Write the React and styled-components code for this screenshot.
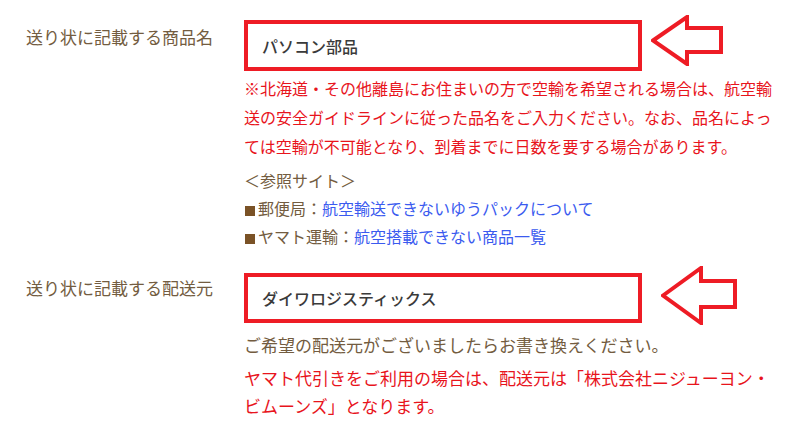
import React from "react";
import styled, { createGlobalStyle } from "styled-components";

const GlobalStyle = createGlobalStyle`
  html, body {
    margin: 0;
    padding: 0;
    background: #ffffff;
  }
  body {
    font-family: "Noto Sans CJK JP", "Noto Sans", sans-serif;
    color: #735c40;
  }
`;

const Page = styled.div`
  padding-top: 20px;
  display: flex;
  flex-direction: column;
  gap: 23px;
`;

const Row = styled.div`
  display: grid;
  grid-template-columns: 218px 536px;
  padding-left: 26px;
`;

const Label = styled.div`
  font-size: 17px;
  line-height: 28px;
  padding-top: ${(p) => p.$top}px;
  color: #735c40;
`;

const Content = styled.div`
  display: flex;
  flex-direction: column;
`;

const FieldLine = styled.div`
  display: flex;
  align-items: flex-start;
`;

const ValueBox = styled.div`
  box-sizing: border-box;
  width: 398px;
  height: ${(p) => p.$h}px;
  border: 4px solid #ee1c25;
  padding-left: 14px;
  display: flex;
  align-items: center;
  font-size: 16px;
  font-weight: 500;
  color: #3a3a3a;
`;

const ArrowWrap = styled.div`
  margin-left: ${(p) => p.$gap}px;
  margin-top: ${(p) => p.$top}px;
  line-height: 0;
`;

const Note = styled.p`
  margin: ${(p) => p.$mt}px 0 0;
  font-size: ${(p) => p.$size}px;
  line-height: ${(p) => p.$lh}px;
  color: ${(p) => (p.$red ? "#e8141c" : "#735c40")};
`;

const RefList = styled.div`
  margin-top: 6px;
  font-size: 16px;
  line-height: 28px;
  color: #735c40;
`;

const Square = styled.span`
  display: inline-block;
  width: 10px;
  height: 10px;
  margin: 0 3px 1px 1px;
  background: #7a5226;
  vertical-align: middle;
`;

const RefLink = styled.a`
  color: #3b5bef;
  text-decoration: none;
`;

const Arrow = ({ w, h, shaftTop, shaftBottom, headX }) => (
  <svg width={w} height={h} viewBox={`0 0 ${w} ${h}`}>
    <polygon
      points={`2,${h / 2} ${headX},2 ${headX},${shaftTop} ${w - 2},${shaftTop} ${w - 2},${shaftBottom} ${headX},${shaftBottom} ${headX},${h - 2}`}
      fill="#ffffff"
      stroke="#ee1c25"
      strokeWidth="4"
      strokeLinejoin="miter"
    />
  </svg>
);

export default function App() {
  return (
    <>
      <GlobalStyle />
      <Page>
        <Row>
          <Label $top={3}>送り状に記載する商品名</Label>
          <Content>
            <FieldLine>
              <ValueBox $h={51}>パソコン部品</ValueBox>
              <ArrowWrap $gap={9} $top={-5}>
                <Arrow w={72} h={51} shaftTop={13} shaftBottom={37} headX={36} />
              </ArrowWrap>
            </FieldLine>
            <Note $red $mt={3} $size={16} $lh={28.8}>
              ※北海道・その他離島にお住まいの方で空輸を希望される場合は、航空輸送の安全ガイドラインに従った品名をご入力ください。なお、品名によっては空輸が不可能となり、到着までに日数を要する場合があります。
            </Note>
            <RefList>
              <div>＜参照サイト＞</div>
              <div>
                <Square />郵便局：<RefLink href="#">航空輸送できないゆうパックについて</RefLink>
              </div>
              <div>
                <Square />ヤマト運輸：<RefLink href="#">航空搭載できない商品一覧</RefLink>
              </div>
            </RefList>
          </Content>
        </Row>
        <Row>
          <Label $top={1}>送り状に記載する配送元</Label>
          <Content>
            <FieldLine>
              <ValueBox $h={50}>ダイワロジスティックス</ValueBox>
              <ArrowWrap $gap={19} $top={-7}>
                <Arrow w={76} h={59} shaftTop={15} shaftBottom={41} headX={40} />
              </ArrowWrap>
            </FieldLine>
            <Note $mt={6} $size={17} $lh={28}>
              ご希望の配送元がございましたらお書き換えください。
            </Note>
            <Note $red $mt={5} $size={17} $lh={28}>
              ヤマト代引きをご利用の場合は、配送元は「株式会社ニジューヨン・ビムーンズ」となります。
            </Note>
          </Content>
        </Row>
      </Page>
    </>
  );
}
